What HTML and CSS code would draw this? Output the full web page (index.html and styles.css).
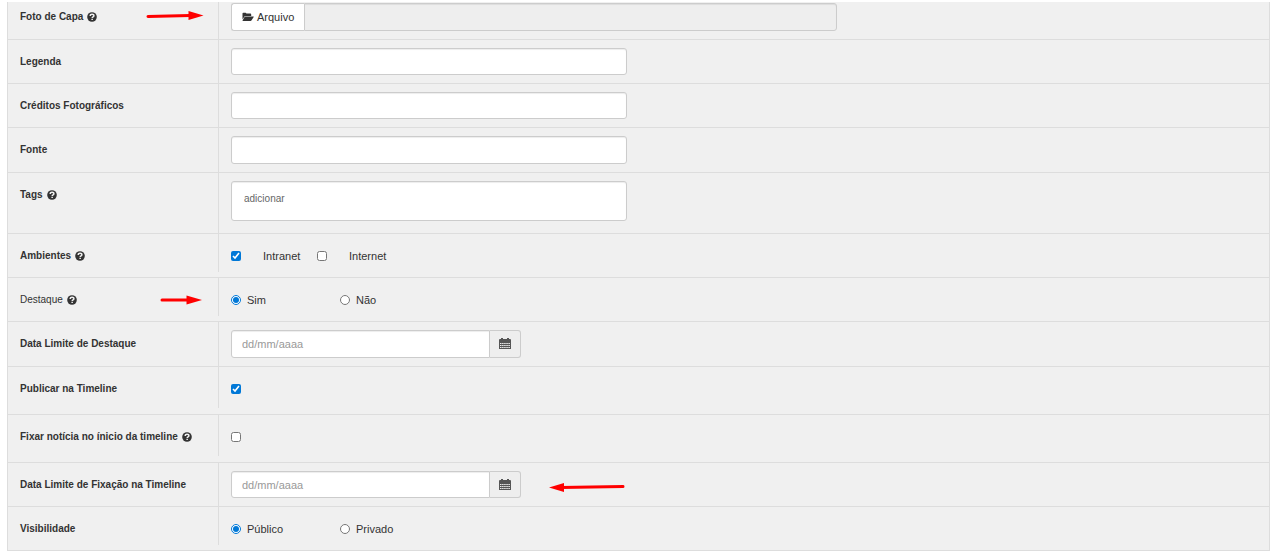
FILE: index.html
```html
<!DOCTYPE html>
<html lang="pt-BR">
<head>
<meta charset="utf-8">
<title>Notícia</title>
<link rel="stylesheet" href="styles.css">
</head>
<body>
<svg class="sprite" aria-hidden="true">
  <symbol id="help" viewBox="0 0 10 10">
    <circle cx="5" cy="5" r="4.8" fill="#333"/>
    <path d="M3.200 3.900C3.200 2.700 4 2.200 5 2.200c1.100 0 1.900.6 1.900 1.500C6.900 4.900 5.200 4.700 5.200 6" fill="none" stroke="#f0f0f0" stroke-width="1.500"/>
    <path d="M4.400 6.700h1.500v1.400H4.400z" fill="#f0f0f0"/>
  </symbol>
  <symbol id="folder" viewBox="0 0 12 10">
    <path d="M.5 7.500V1.500q0-.8.8-.8h2.200q.8 0 .8.900h4q.9 0 .9.900v1.400H3.500q-.7 0-1.100.6z" fill="#333"/>
    <path d="M3.300 4.400h8.100q.6 0 .3.500L9.600 8.300q-.4.700-1.100.7H.9q-.7 0-.3-.6l1.900-3.400q.3-.6.8-.6z" fill="#333"/>
  </symbol>
  <symbol id="calendar" viewBox="0 0 12 12">
    <path d="M1 1h1V0h2v1h4V0h2v1h1q1 0 1 1v9H0V2q0-1 1-1z" fill="#555"/>
    <path d="M1 5.500h10M1 7.500h10M1 9.500h10" stroke="#eee" stroke-width="1" stroke-dasharray="1.500 .6"/>
  </symbol>
</svg>
<form class="form">
  <div class="row row-first">
    <div class="label"><label class="name" for="capa">Foto de Capa</label> <svg class="help"><use href="#help"/></svg></div>
    <div class="field">
      <div class="group group-file">
        <button type="button" class="btn"><svg class="folder"><use href="#folder"/></svg>Arquivo</button>
        <input class="input" id="capa" type="text" disabled>
      </div>
    </div>
    <svg class="arrow arrow-capa" viewBox="0 0 58 12"><path d="M2 6.500L44 5.500" stroke="red" stroke-width="3" stroke-linecap="round"/><path d="M42.500 1L57.500 5.500 42.500 10z" fill="red"/></svg>
  </div>
  <div class="row">
    <div class="label"><label class="name" for="legenda">Legenda</label></div>
    <div class="field"><input class="input" id="legenda" type="text"></div>
  </div>
  <div class="row">
    <div class="label"><label class="name" for="creditos">Créditos Fotográficos</label></div>
    <div class="field"><input class="input" id="creditos" type="text"></div>
  </div>
  <div class="row">
    <div class="label"><label class="name" for="fonte">Fonte</label></div>
    <div class="field"><input class="input input-tall" id="fonte" type="text"></div>
  </div>
  <div class="row row-tags">
    <div class="label"><label class="name" for="tags">Tags</label> <svg class="help"><use href="#help"/></svg></div>
    <div class="field"><input class="input input-tags" id="tags" type="text" placeholder="adicionar"></div>
  </div>
  <div class="row row-short">
    <div class="label"><span class="name">Ambientes</span> <svg class="help"><use href="#help"/></svg></div>
    <div class="field choices">
      <label class="choice choice-check"><input type="checkbox" checked>Intranet</label>
      <label class="choice choice-check"><input type="checkbox">Internet</label>
    </div>
  </div>
  <div class="row row-short">
    <div class="label"><span class="name name-plain">Destaque</span> <svg class="help"><use href="#help"/></svg></div>
    <div class="field choices">
      <label class="choice choice-radio"><input type="radio" name="destaque" checked>Sim</label>
      <label class="choice choice-radio"><input type="radio" name="destaque">Não</label>
    </div>
    <svg class="arrow arrow-destaque" viewBox="0 0 42 12"><path d="M2 6h28" stroke="red" stroke-width="3" stroke-linecap="round"/><path d="M26.500 1.500L42 6 26.500 10.500z" fill="red"/></svg>
  </div>
  <div class="row">
    <div class="label"><label class="name" for="limite">Data Limite de Destaque</label></div>
    <div class="field">
      <div class="group group-date">
        <input class="input input-tall" id="limite" type="text" placeholder="dd/mm/aaaa">
        <button type="button" class="addon" aria-label="Abrir calendário"><svg class="calendar"><use href="#calendar"/></svg></button>
      </div>
    </div>
  </div>
  <div class="row row-single">
    <div class="label"><label class="name" for="publicar">Publicar na Timeline</label></div>
    <div class="field choices"><div class="choice"><input id="publicar" type="checkbox" checked></div></div>
  </div>
  <div class="row row-single">
    <div class="label"><label class="name" for="fixar">Fixar notícia no ínicio da timeline</label> <svg class="help"><use href="#help"/></svg></div>
    <div class="field choices"><div class="choice"><input id="fixar" type="checkbox"></div></div>
  </div>
  <div class="row">
    <div class="label"><label class="name" for="fixacao">Data Limite de Fixação na Timeline</label></div>
    <div class="field">
      <div class="group group-date">
        <input class="input" id="fixacao" type="text" placeholder="dd/mm/aaaa">
        <button type="button" class="addon" aria-label="Abrir calendário"><svg class="calendar"><use href="#calendar"/></svg></button>
      </div>
    </div>
    <svg class="arrow arrow-fixacao" viewBox="0 0 76 12"><path d="M12 6.500L74 5.500" stroke="red" stroke-width="3" stroke-linecap="round"/><path d="M0 6.500L15 2v9z" fill="red"/></svg>
  </div>
  <div class="row row-short">
    <div class="label"><span class="name">Visibilidade</span></div>
    <div class="field choices">
      <label class="choice choice-radio"><input type="radio" name="visibilidade" checked>Público</label>
      <label class="choice choice-radio"><input type="radio" name="visibilidade">Privado</label>
    </div>
  </div>
</form>
</body>
</html>
```
FILE: styles.css
```css
* { box-sizing: border-box; }

body {
  margin: 0;
  padding: 2px 7px 4px;
  background: #fff;
  color: #333;
  font: 11px/16px "Liberation Sans", Arial, sans-serif;
}

.sprite { position: absolute; width: 0; height: 0; }

.form {
  background: #f0f0f0;
  border: 1px solid #ddd;
  border-top: 0;
}

.row {
  position: relative;
  display: grid;
  grid-template-columns: 210px 1fr;
  border-bottom: 1px solid #ddd;
}
.row:last-child { border-bottom: 0; }
.row-short { padding-bottom: 5px; }
.row-single { padding-bottom: 6px; }

.label {
  display: flex;
  align-items: center;
  align-self: start;
  gap: 4px;
  padding: 14px 0 0 12px;
  font-size: 10px;
}
.name { font-weight: bold; white-space: nowrap; }
.name-plain { font-weight: normal; }
.help { width: 10px; height: 10px; }

.field {
  border-left: 1px solid #ddd;
  padding: 8px 12px;
}
.row-first .field { padding-top: 1px; }
.row-first .label { padding-top: 7px; }
.row-tags .field { padding-bottom: 12px; }

.input {
  display: block;
  width: 396px;
  max-width: 100%;
  height: 27px;
  padding: 0 10px;
  border: 1px solid #ccc;
  border-radius: 3px;
  background: #fff;
  box-shadow: inset 0 1px 1px rgba(0, 0, 0, .075);
  color: #555;
  font: inherit;
}
.input::placeholder { color: #999; opacity: 1; }
.input:disabled { background: #eee; }
.input-tall { height: 28px; }
.input-tags { height: 40px; padding: 0 12px 6px; font-size: 10px; }
.input-tags::placeholder { color: #666; }

.group { display: flex; max-width: 100%; }
.group .input { flex: 1; min-width: 0; }
.group-file { width: 606px; }
.group-file .input { height: 28px; border-radius: 0 3px 3px 0; }
.group-date { width: 290px; }
.group-date .input { border-radius: 3px 0 0 3px; }

.btn {
  display: flex;
  align-items: center;
  gap: 3px;
  height: 28px;
  padding: 0 10px;
  border: 1px solid #ccc;
  border-right: 0;
  border-radius: 3px 0 0 3px;
  background: #fff;
  color: #333;
  font: inherit;
}
.folder { width: 12px; height: 10px; }

.addon {
  display: flex;
  align-items: center;
  justify-content: center;
  width: 31px;
  padding: 0;
  border: 1px solid #ccc;
  border-left: 0;
  border-radius: 0 3px 3px 0;
  background: #eee;
}
.calendar { width: 12px; height: 12px; }

.choices { display: flex; padding: 14px 12px 8px; }
.row-single .choices { padding-bottom: 11px; }
.choice { display: flex; align-items: center; height: 16px; }
.choice input {
  width: 10px;
  height: 10px;
  margin: 0;
  accent-color: #0078d7;
}
.choice-check { width: 86px; gap: 22px; }
.choice-radio { width: 109px; gap: 6px; }

.arrow { position: absolute; height: 12px; fill: none; }
.arrow-capa { left: 138px; top: 8px; width: 58px; }
.arrow-destaque { left: 152px; top: 16px; width: 42px; }
.arrow-fixacao { left: 541px; top: 18px; width: 76px; }
```
